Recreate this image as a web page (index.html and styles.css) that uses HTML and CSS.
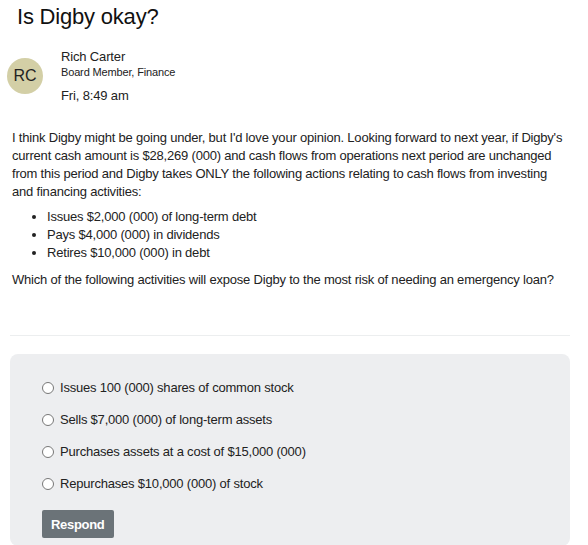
FILE: index.html
```html
<!DOCTYPE html>
<html>
<head>
<meta charset="utf-8">
<link rel="stylesheet" href="styles.css">
</head>
<body>
<div class="page">
  <h1 class="title">Is Digby okay?</h1>
  <div class="author">
    <div class="avatar">RC</div>
    <div class="meta">
      <div class="name">Rich Carter</div>
      <div class="role">Board Member, Finance</div>
      <div class="time">Fri, 8:49 am</div>
    </div>
  </div>
  <div class="body">
    <p class="para">I think Digby might be going under, but I'd love your opinion. Looking forward to next year, if Digby's current cash amount is $28,269 (000) and cash flows from operations next period are unchanged from this period and Digby takes ONLY the following actions relating to cash flows from investing and financing activities:</p>
    <ul class="list">
      <li>Issues $2,000 (000) of long-term debt</li>
      <li>Pays $4,000 (000) in dividends</li>
      <li>Retires $10,000 (000) in debt</li>
    </ul>
    <p class="question">Which of the following activities will expose Digby to the most risk of needing an emergency loan?</p>
  </div>
  <hr class="divider">
  <div class="answers">
    <label class="option"><input type="radio" name="a"><span>Issues 100 (000) shares of common stock</span></label>
    <label class="option"><input type="radio" name="a"><span>Sells $7,000 (000) of long-term assets</span></label>
    <label class="option"><input type="radio" name="a"><span>Purchases assets at a cost of $15,000 (000)</span></label>
    <label class="option"><input type="radio" name="a"><span>Repurchases $10,000 (000) of stock</span></label>
    <button class="respond">Respond</button>
  </div>
</div>
</body>
</html>
```

FILE: styles.css
```css
html, body {
  margin: 0;
  padding: 0;
  background: #fff;
}
body {
  font-family: "Liberation Sans", Arial, sans-serif;
  color: #222;
}
.page {
  padding: 0 18px 0 10px;
}
.title {
  margin: 0;
  padding: 4px 0 0 7px;
  font-size: 22px;
  font-weight: normal;
  line-height: 26px;
  letter-spacing: -0.2px;
  color: #111;
}
.author {
  display: flex;
  align-items: center;
  gap: 18px;
  margin-top: 18px;
}
.avatar {
  width: 36px;
  height: 36px;
  border-radius: 50%;
  background: #d3cfa6;
  color: #222;
  font-size: 16px;
  display: flex;
  align-items: center;
  justify-content: center;
  margin-left: -3px;
}
.meta {
  display: flex;
  flex-direction: column;
  letter-spacing: -0.15px;
}
.name {
  font-size: 13px;
  line-height: 16px;
  margin-top: 1px;
}
.role {
  font-size: 11px;
  line-height: 14px;
}
.time {
  font-size: 13px;
  line-height: 16px;
  margin-top: 9px;
}
.body {
  padding: 0 0 0 2px;
  font-size: 13px;
  line-height: 18px;
  margin-top: 25px;
  letter-spacing: -0.2px;
}
.para {
  margin: 0;
}
.list {
  margin: 7px 0 0 0;
  padding-left: 35px;
}
.question {
  margin: 9px 0 0 0;
}
.divider {
  border: 0;
  border-top: 1px solid #eceeef;
  margin: 46px 0 0 0;
}
.answers {
  margin-top: 18px;
  background: #edeef0;
  border-radius: 8px;
  padding: 17px 32px 8px 32px;
  display: flex;
  flex-direction: column;
  align-items: flex-start;
}
.option {
  display: flex;
  align-items: center;
  height: 32px;
  font-size: 13px;
  letter-spacing: -0.2px;
}
.option input {
  margin: 2px 6px 0 0;
  width: 12px;
  height: 12px;
}
.respond {
  margin-top: 11px;
  background: #6b7378;
  color: #fff;
  border: 0;
  border-radius: 2px;
  font-family: "Liberation Sans", Arial, sans-serif;
  font-weight: bold;
  font-size: 13px;
  letter-spacing: -0.3px;
  padding: 0 9px;
  height: 28px;
}
```
